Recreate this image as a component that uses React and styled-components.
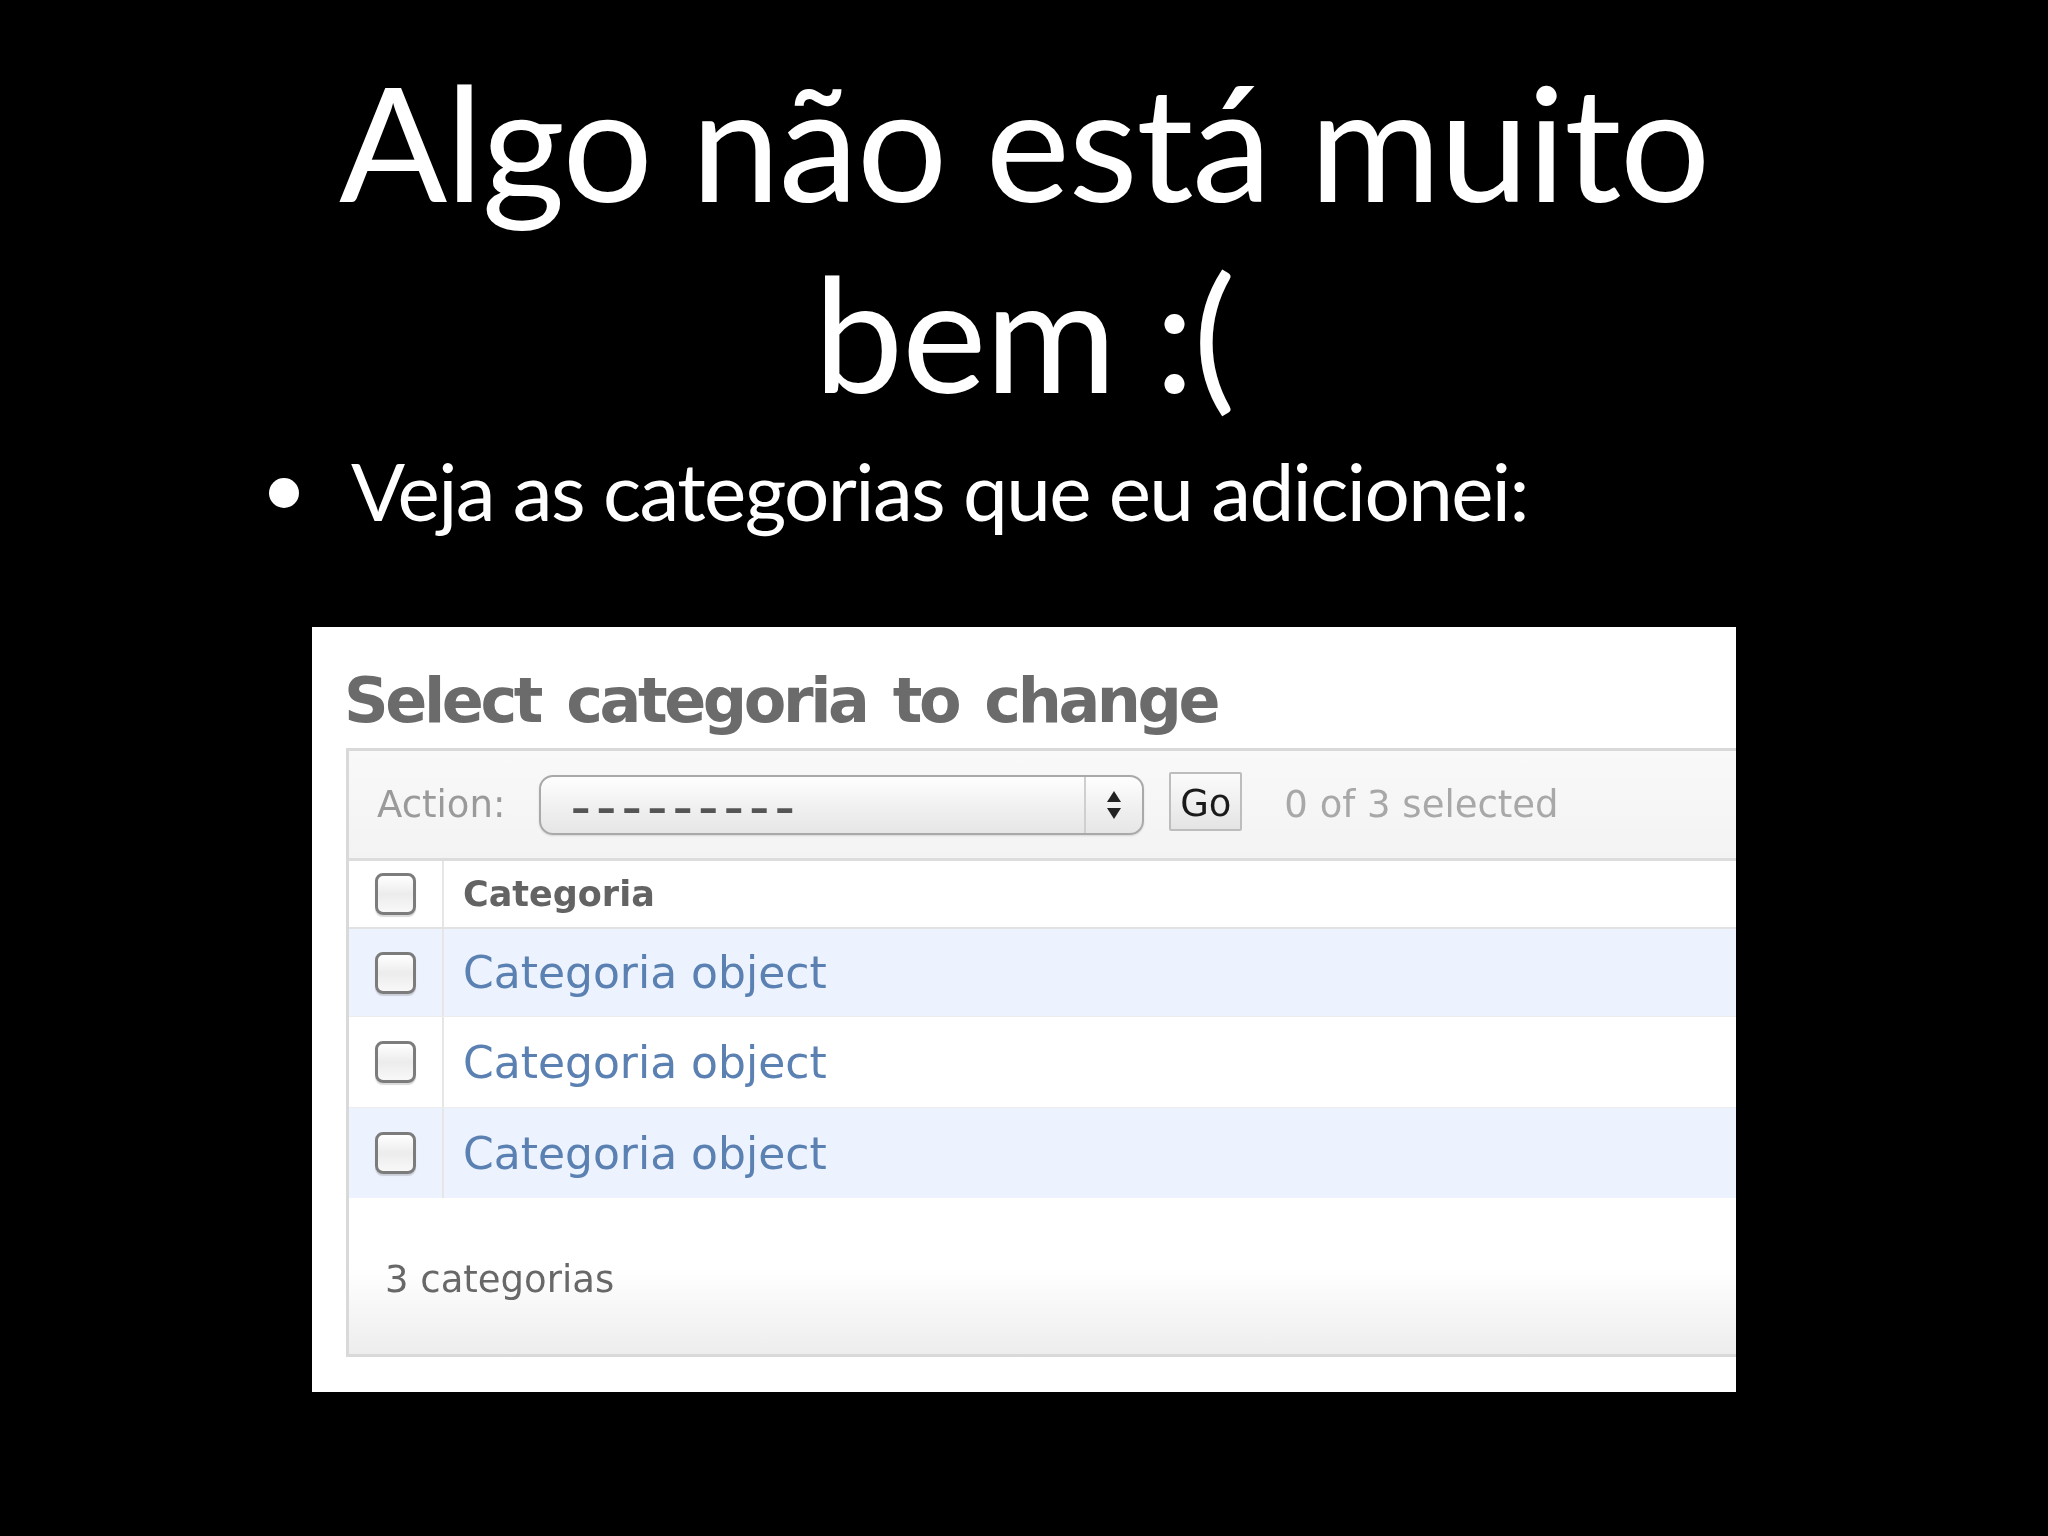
import React from 'react';
import styled, { createGlobalStyle } from 'styled-components';

const GlobalStyle = createGlobalStyle`
  html, body {
    margin: 0;
    padding: 0;
    background: #000;
  }
`;

const Slide = styled.div`
  width: 2048px;
  height: 1536px;
  background: #000;
  color: #fff;
  font-family: Lato, 'Open Sans', sans-serif;
  overflow: hidden;
`;

const Title = styled.h1`
  margin: 45px 0 0;
  font-weight: 400;
  font-size: 160px;
  line-height: 191px;
  letter-spacing: -1.5px;
  text-align: center;
`;

const Bullet = styled.div`
  display: flex;
  align-items: center;
  margin: 13px 0 0 269px;
  font-size: 80px;
  line-height: 100px;
  letter-spacing: -1.6px;
  gap: 52px;

  &:before {
    flex: 0 0 30px;
    width: 30px;
    height: 30px;
    border-radius: 50%;
    background: #fff;
    content: '';
    margin-top: 6px;
  }
`;

const Shot = styled.div`
  width: 1424px;
  height: 765px;
  margin: 87px auto 0;
  padding-left: 32px;
  box-sizing: border-box;
  background: #fff;
  overflow: hidden;
  font-family: 'DejaVu Sans', Verdana, sans-serif;
  filter: blur(0.6px);
`;

const ShotTitle = styled.h2`
  margin: 34px 0 7px;
  font-size: 62px;
  line-height: 80px;
  letter-spacing: -3.4px;
  word-spacing: 8px;
  font-weight: 700;
  color: #6b6b6b;
  white-space: nowrap;
`;

const Module = styled.div`
  width: 1500px;
  margin-left: 2px;
  border: 3px solid #d9d9d9;
  border-right: none;
`;

const ActionBar = styled.div`
  display: flex;
  align-items: center;
  height: 107px;
  padding-left: 28px;
  background: linear-gradient(#f9f9f9, #f3f3f3);
  border-bottom: 3px solid #dcdcdc;
  font-size: 37px;
`;

const Label = styled.span`
  color: ${p => p.$color || '#9a9a9a'};
  margin-left: ${p => p.$gap || 0}px;
  white-space: nowrap;
`;

const Select = styled.div`
  display: flex;
  align-items: stretch;
  width: 605px;
  height: 60px;
  margin-left: 34px;
  box-sizing: border-box;
  border: 2px solid #a9a9a9;
  border-radius: 14px;
  background: linear-gradient(#fefefe, #f0f0f0 55%, #e6e6e6);
  box-shadow: 0 1px 2px rgba(0, 0, 0, 0.12);
`;

const SelectValue = styled.div`
  flex: 1;
  display: flex;
  align-items: center;
  padding: 6px 0 0 30px;
  font-size: 38px;
  font-weight: 700;
  letter-spacing: 6.5px;
  color: #555;
`;

const SelectArrows = styled.div`
  display: flex;
  align-items: center;
  justify-content: center;
  width: 56px;
  border-left: 2px solid #cfcfcf;
`;

const GoButton = styled.div`
  display: flex;
  align-items: center;
  justify-content: center;
  width: 73px;
  height: 59px;
  margin: -6px 0 0 25px;
  padding-top: 4px;
  box-sizing: border-box;
  border: 2px solid #bdbdbd;
  border-radius: 2px;
  background: linear-gradient(#fbfbfb, #e4e4e4);
  color: #1a1a1a;
  font-size: 37px;
`;

const Row = styled.div`
  display: flex;
  height: ${p => p.$h}px;
  background: ${p => p.$bg || '#fff'};
  border-bottom: ${p => p.$line || '1px solid #ececec'};
`;

const CheckCell = styled.div`
  display: flex;
  align-items: center;
  justify-content: center;
  width: 93px;
  border-right: 2px solid #e6e6e6;
`;

const Checkbox = styled.div`
  width: 41px;
  height: 42px;
  box-sizing: border-box;
  border: 3px solid #7c7c7c;
  border-radius: 8px;
  background: linear-gradient(#ffffff, #ececec 50%, #f8f8f8);
  box-shadow: 0 2px 1px rgba(0, 0, 0, 0.15);
`;

const TextCell = styled.div`
  display: flex;
  align-items: center;
  padding-left: 19px;
  font-size: ${p => p.$size}px;
  font-weight: ${p => (p.$bold ? 700 : 400)};
  color: ${p => p.$color};
  white-space: nowrap;
`;

const Footer = styled.div`
  height: 156px;
  padding-left: 36px;
  box-sizing: border-box;
  background: linear-gradient(#fff 45%, #ededed);
  font-size: 37px;
  line-height: 37px;
  color: #686868;
  padding-top: 63px;
`;

const Arrows = () => (
  <svg width="16" height="30" viewBox="0 0 16 30">
    <path d="M8 1 L15 12 L1 12 Z" fill="#222" />
    <path d="M1 18 L15 18 L8 29 Z" fill="#222" />
  </svg>
);

const rows = [
  { h: 87, bg: '#edf3fe' },
  { h: 90, bg: '#fff' },
  { h: 90, bg: '#edf3fe' },
];

const App = () => (
  <Slide>
    <GlobalStyle />
    <Title>
      Algo não está muito
      <br />
      bem :(
    </Title>
    <Bullet>Veja as categorias que eu adicionei:</Bullet>
    <Shot>
      <ShotTitle>Select categoria to change</ShotTitle>
      <Module>
        <ActionBar>
          <Label>Action:</Label>
          <Select>
            <SelectValue>–––––––––</SelectValue>
            <SelectArrows>
              <Arrows />
            </SelectArrows>
          </Select>
          <GoButton>Go</GoButton>
          <Label $color="#a8a8a8" $gap={42}>0 of 3 selected</Label>
        </ActionBar>
        <Row $h={66} $line="2px solid #e2e2e2">
          <CheckCell>
            <Checkbox />
          </CheckCell>
          <TextCell $size={35} $bold $color="#636363">Categoria</TextCell>
        </Row>
        {rows.map((r, i) => (
          <Row key={i} $h={r.h} $bg={r.bg} $line={i === 2 ? 'none' : undefined}>
            <CheckCell>
              <Checkbox />
            </CheckCell>
            <TextCell $size={44} $color="#5b80b2">Categoria object</TextCell>
          </Row>
        ))}
        <Footer>3 categorias</Footer>
      </Module>
    </Shot>
  </Slide>
);

export default App;
